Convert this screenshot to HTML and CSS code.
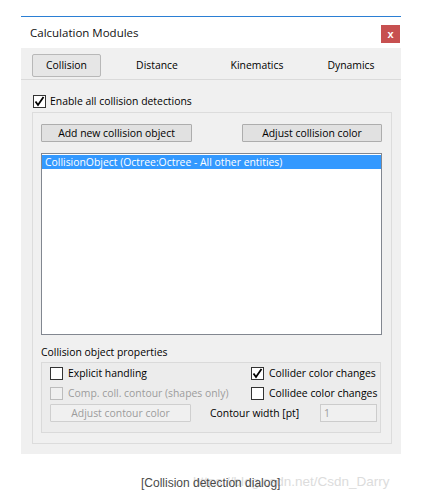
FILE: index.html
```html
<!DOCTYPE html>
<html>
<head>
<meta charset="utf-8">
<link rel="stylesheet" href="styles.css">
</head>
<body>
<div class="window">
  <div class="titlebar">
    <span class="title">Calculation Modules</span>
    <span class="close">x</span>
  </div>
  <div class="client">
    <div class="tabs">
      <div class="tab active">Collision</div>
      <div class="tab">Distance</div>
      <div class="tab">Kinematics</div>
      <div class="tab">Dynamics</div>
    </div>
    <div class="page">
      <label class="check-row enable">
        <span class="box"><svg viewBox="0 0 13 13" width="13" height="13"><path d="M2.5 6.5 L5 10 L10.5 2" fill="none" stroke="#000" stroke-width="1.8"/></svg></span>
        <span>Enable all collision detections</span>
      </label>
      <div class="frame">
        <div class="btn-row">
          <div class="btn add">Add new collision object</div>
          <div class="btn adjust">Adjust collision color</div>
        </div>
        <div class="list">
          <div class="item selected">CollisionObject (Octree:Octree - All other entities)</div>
        </div>
        <div class="group-label">Collision object properties</div>
        <div class="group">
          <div class="grow">
            <label class="check-row"><span class="box"></span><span>Explicit handling</span></label>
            <label class="check-row"><span class="box"><svg viewBox="0 0 13 13" width="13" height="13"><path d="M2.5 6.5 L5 10 L10.5 2" fill="none" stroke="#000" stroke-width="1.8"/></svg></span><span>Collider color changes</span></label>
          </div>
          <div class="grow">
            <label class="check-row disabled"><span class="box"></span><span>Comp. coll. contour (shapes only)</span></label>
            <label class="check-row"><span class="box"></span><span>Collidee color changes</span></label>
          </div>
          <div class="grow third">
            <div class="btn disabled-btn">Adjust contour color</div>
            <span class="cw">Contour width [pt]</span>
            <div class="input">1</div>
          </div>
        </div>
      </div>
    </div>
  </div>
</div>
<div class="caption-wrap">
  <span class="watermark">https://blog.csdn.net/Csdn_Darry</span>
  <span class="caption">[Collision detection dialog]</span>
</div>
</body>
</html>
```
FILE: styles.css
```css
html, body { margin: 0; padding: 0; background: #fff; }
body { font-family: "Segoe UI", "Open Sans", "Noto Sans", sans-serif; font-size: 10.4px; color: #000; }

.window { margin: 16px 0 0 21px; width: 380px; border-top: 1px solid #2b7fd4; }
.titlebar { height: 31px; background: #fff; display: flex; justify-content: space-between; align-items: flex-start; }
.title { font-size: 11.5px; margin: 8px 0 0 9px; color: #111; }
.close { width: 19px; height: 18px; margin: 8px 1px 0 0; background: #c75050; color: #fff; font-family: "Liberation Sans", sans-serif; font-weight: bold; font-size: 11px; display: flex; align-items: center; justify-content: center; line-height: 1; }

.client { background: #f0f0f0; height: 406px; }
.tabs { height: 31px; border-bottom: 1px solid #dadada; display: grid; grid-template-columns: 69px 112px 88px 100px; padding-left: 11px; align-items: center; }
.tab { text-align: center; line-height: 21px; padding-top: 3px; }
.tab.active { border: 1px solid #b8b8b8; border-radius: 2px; background: #e6e6e6; padding-top: 0; margin-top: 3px; }

.page { padding: 14px 0 0 12px; }
.check-row { display: flex; align-items: center; gap: 4px; height: 14px; white-space: nowrap; }
.box { width: 11px; height: 11px; border: 1px solid #333; background: #fff; display: inline-block; flex: none; }
.box svg { display: block; margin: -1px; }
.enable { margin-bottom: 4px; }

.frame { margin-left: -1px; width: 360px; height: 332px; border: 1px solid #dcdcdc; box-sizing: border-box; padding: 11px 0 0 8px; }
.btn-row { display: flex; justify-content: space-between; width: 341px; }
.btn { height: 18px; border: 1px solid #adadad; background: #e1e1e1; box-sizing: border-box; text-align: center; line-height: 16px; border-radius: 1px; white-space: nowrap; }
.btn.add { width: 151px; }
.btn.adjust { width: 140px; }
.list { margin-top: 11px; width: 341px; height: 182px; border: 1px solid #828790; box-sizing: border-box; background: #fff; padding: 1px 0 0; }
.item { height: 14px; line-height: 14px; padding-left: 3px; white-space: nowrap; }
.item.selected { background: #3399ff; color: #fff; }
.group-label { margin-top: 10px; height: 15px; line-height: 15px; }
.group { margin-top: 2px; width: 340px; height: 71px; border: 1px solid #dadada; box-sizing: border-box; background: #ececec; padding: 0 0 0 8px; }
.grow { display: flex; height: 20px; align-items: center; }
.grow .check-row { gap: 5px; }
.grow .check-row:first-child { width: 201px; }
.disabled { color: #9c9c9c; }
.disabled .box { border-color: #bcbcbc; background: #f0f0f0; }
.disabled-btn { width: 141px; color: #9c9c9c; border-color: #cfcfcf; background: #f0f0f0; }
.cw { margin-left: 19px; width: 110px; white-space: nowrap; }
.input { width: 57px; height: 18px; border: 1px solid #cccccc; box-sizing: border-box; background: #f0f0f0; color: #9c9c9c; line-height: 16px; padding-left: 3px; }

.caption-wrap { position: relative; margin-top: 22px; height: 20px; }
.caption { position: absolute; left: 141px; top: 0; font-family: "Liberation Sans", Arial, sans-serif; font-size: 12px; color: #4a4a4a; }
.watermark { position: absolute; left: 193px; top: -2px; font-family: "Liberation Sans", Arial, sans-serif; font-size: 13.5px; color: #dcdcdc; }
```
